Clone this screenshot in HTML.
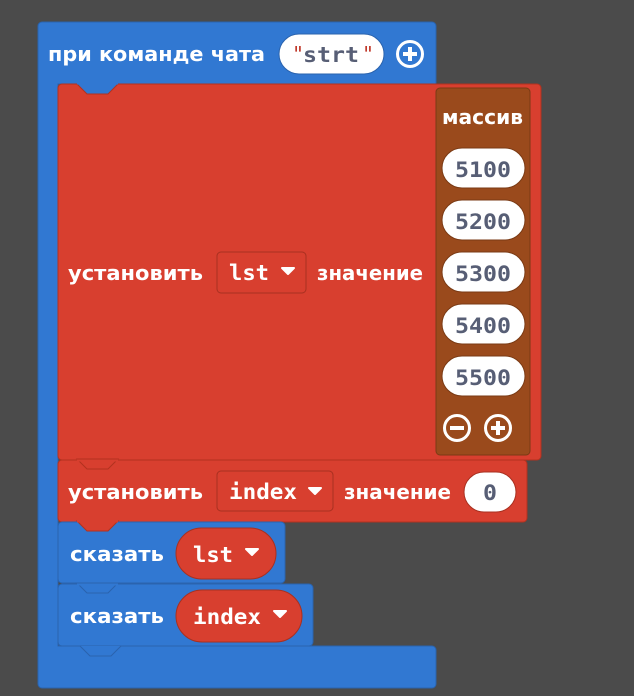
<!DOCTYPE html>
<html><head><meta charset="utf-8"><style>
html,body{margin:0;padding:0;background:#4b4b4b;width:634px;height:696px;overflow:hidden}
svg{display:block}
.t{font-family:"DejaVu Sans","Liberation Sans",sans-serif;font-weight:bold;font-size:20px;fill:#fff}
.m{font-family:"DejaVu Sans Mono","Liberation Mono",monospace;font-weight:bold;font-size:21px;fill:#575e75}
.w{font-family:"DejaVu Sans Mono","Liberation Mono",monospace;font-weight:bold;font-size:21px;fill:#fff}
</style></head><body>
<svg width="634" height="696" viewBox="0 0 634 696" xmlns="http://www.w3.org/2000/svg">
<rect width="634" height="696" fill="#4b4b4b"/>
<path d="M42 22 H432 a4 4 0 0 1 4 4 V84 H58 V646 H432 a4 4 0 0 1 4 4 V684 a4 4 0 0 1 -4 4 H42 a4 4 0 0 1 -4 -4 V26 a4 4 0 0 1 4 -4Z" fill="#3178d2" stroke="#2a63ae" stroke-width="1"/>
<text class="t" x="48" y="61" textLength="217" lengthAdjust="spacingAndGlyphs">при команде чата</text>
<rect x="279" y="34" width="105" height="40" rx="20" fill="#fff" stroke="#2a63ae"/>
<text x="292" y="61" font-family="DejaVu Sans Mono,monospace" font-size="20" fill="#c0392b">"</text>
<text class="m" x="303" y="62" textLength="56" lengthAdjust="spacingAndGlyphs">strt</text>
<text x="362" y="61" font-family="DejaVu Sans Mono,monospace" font-size="20" fill="#c0392b">"</text>
<circle cx="410" cy="54" r="12.5" fill="none" stroke="#fff" stroke-width="3"/>
<path d="M403 54 H417 M410 47 V61" stroke="#fff" stroke-width="4"/>
<rect x="58" y="84" width="483" height="376" rx="4" fill="#d83f2f" stroke="#b2321f"/>
<path d="M77 84 L87 94 H108 L118 84Z" fill="#3178d2" stroke="#b2321f"/>
<path d="M77 83.5 H118" stroke="#3178d2" stroke-width="2"/>
<text class="t" x="68" y="280" textLength="135" lengthAdjust="spacingAndGlyphs">установить</text>
<rect x="217" y="252" width="89" height="41" rx="4" fill="#d83f2f" stroke="#a83020"/>
<text class="w" x="229" y="280" textLength="40" lengthAdjust="spacingAndGlyphs">lst</text>
<path d="M282 268 H294 L288 274Z" fill="#fff" stroke="#fff" stroke-width="2" stroke-linejoin="round"/>
<text class="t" x="317" y="280" textLength="106" lengthAdjust="spacingAndGlyphs">значение</text>
<rect x="436" y="88" width="94" height="367" rx="4" fill="#9a4a1c" stroke="#7a3a14"/>
<text class="t" x="442" y="124" textLength="81" lengthAdjust="spacingAndGlyphs">массив</text>
<g>
<rect x="442" y="148" width="83" height="40" rx="20" fill="#fff" stroke="#7a3a14"/>
<text class="m" x="455" y="177" textLength="56" lengthAdjust="spacingAndGlyphs">5100</text>
<rect x="442" y="200" width="83" height="40" rx="20" fill="#fff" stroke="#7a3a14"/>
<text class="m" x="455" y="229" textLength="56" lengthAdjust="spacingAndGlyphs">5200</text>
<rect x="442" y="252" width="83" height="40" rx="20" fill="#fff" stroke="#7a3a14"/>
<text class="m" x="455" y="281" textLength="56" lengthAdjust="spacingAndGlyphs">5300</text>
<rect x="442" y="304" width="83" height="40" rx="20" fill="#fff" stroke="#7a3a14"/>
<text class="m" x="455" y="333" textLength="56" lengthAdjust="spacingAndGlyphs">5400</text>
<rect x="442" y="356" width="83" height="40" rx="20" fill="#fff" stroke="#7a3a14"/>
<text class="m" x="455" y="385" textLength="56" lengthAdjust="spacingAndGlyphs">5500</text>
</g>
<circle cx="457" cy="428" r="12.5" fill="none" stroke="#fff" stroke-width="3"/>
<path d="M450 428 H464" stroke="#fff" stroke-width="4"/>
<circle cx="498" cy="428" r="12.5" fill="none" stroke="#fff" stroke-width="3"/>
<path d="M491 428 H505 M498 421 V435" stroke="#fff" stroke-width="4"/>
<rect x="58" y="460" width="469" height="62" rx="4" fill="#d83f2f" stroke="#b2321f"/>
<path d="M77 459 L87 469 H108 L118 459Z" fill="#d83f2f" stroke="#b2321f"/>
<path d="M77 460.5 H118" stroke="#d83f2f" stroke-width="2"/>
<text class="t" x="68" y="499" textLength="135" lengthAdjust="spacingAndGlyphs">установить</text>
<rect x="217" y="471" width="116" height="40" rx="4" fill="#d83f2f" stroke="#a83020"/>
<text class="w" x="229" y="499" textLength="68" lengthAdjust="spacingAndGlyphs">index</text>
<path d="M309 488 H321 L315 494Z" fill="#fff" stroke="#fff" stroke-width="2" stroke-linejoin="round"/>
<text class="t" x="344" y="499" textLength="107" lengthAdjust="spacingAndGlyphs">значение</text>
<rect x="464" y="472" width="52" height="40" rx="20" fill="#fff" stroke="#a83020"/>
<text class="m" x="483" y="500" textLength="14" lengthAdjust="spacingAndGlyphs">0</text>
<rect x="58" y="522" width="227" height="61" rx="4" fill="#3178d2" stroke="#2a63ae"/>
<path d="M77 521 L87 531 H108 L118 521Z" fill="#d83f2f" stroke="#b2321f"/>
<path d="M77 521.5 H118" stroke="#d83f2f" stroke-width="2"/>
<text class="t" x="70" y="561" textLength="94" lengthAdjust="spacingAndGlyphs">сказать</text>
<rect x="176" y="528" width="100" height="51" rx="25.5" fill="#d83f2f" stroke="#a83020"/>
<text class="w" x="193" y="562" textLength="40" lengthAdjust="spacingAndGlyphs">lst</text>
<path d="M246 549 H258 L252 555Z" fill="#fff" stroke="#fff" stroke-width="2" stroke-linejoin="round"/>
<rect x="58" y="584" width="255" height="62" rx="4" fill="#3178d2" stroke="#2a63ae"/>
<path d="M77 583 L87 593 H108 L118 583Z" fill="#3178d2" stroke="#2a63ae"/>
<path d="M77 584.5 H118" stroke="#3178d2" stroke-width="2"/>
<text class="t" x="70" y="623" textLength="94" lengthAdjust="spacingAndGlyphs">сказать</text>
<rect x="176" y="590" width="126" height="52" rx="26" fill="#d83f2f" stroke="#a83020"/>
<text class="w" x="193" y="624" textLength="68" lengthAdjust="spacingAndGlyphs">index</text>
<path d="M274 611 H286 L280 617Z" fill="#fff" stroke="#fff" stroke-width="2" stroke-linejoin="round"/>
<path d="M80 646 L90 656 H111 L121 646" fill="#3178d2" stroke="#2a63ae"/>
</svg>
</body></html>
